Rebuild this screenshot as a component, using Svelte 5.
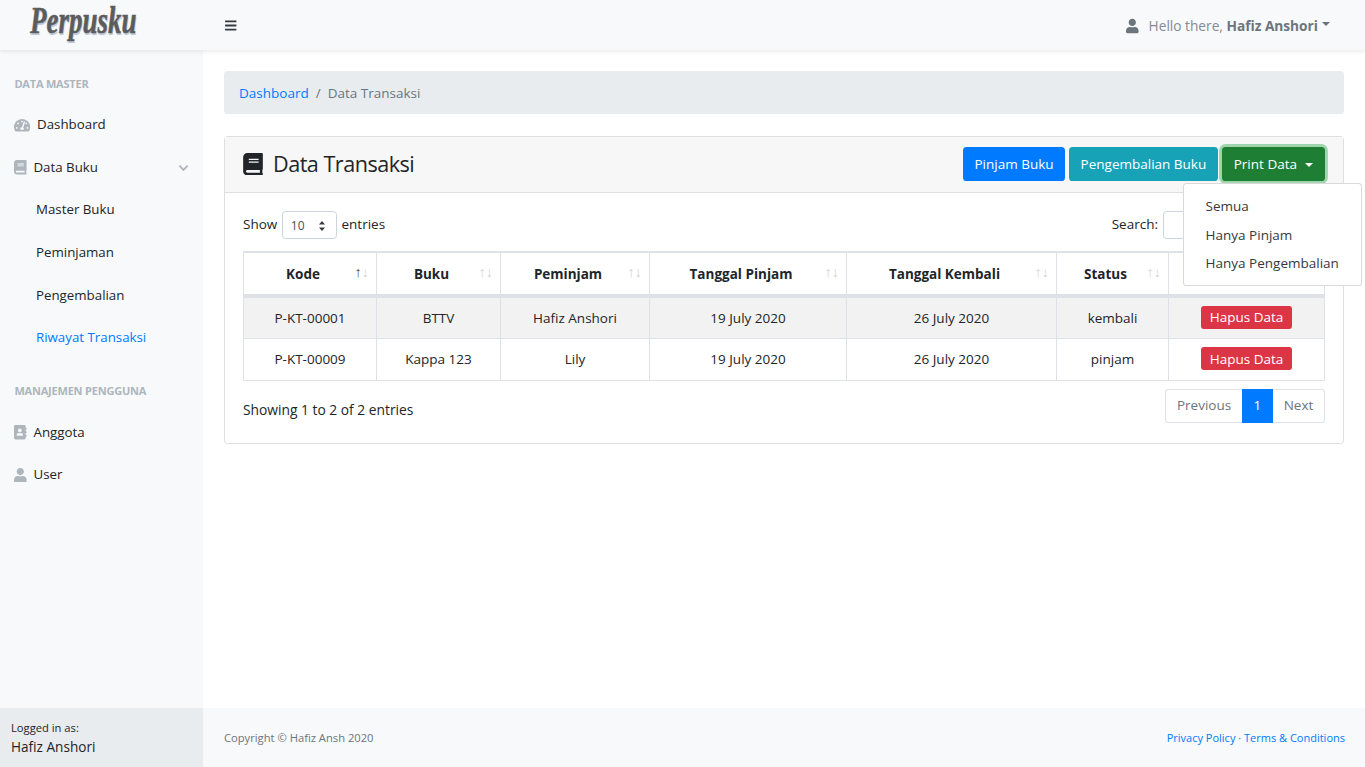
<script>
	const icons = {
		user: ['0 0 448 512', 'M224 256c70.7 0 128-57.3 128-128S294.7 0 224 0 96 57.3 96 128s57.3 128 128 128zm89.6 32h-16.7c-22.2 10.2-46.9 16-72.9 16s-50.6-5.8-72.9-16h-16.7C60.2 288 0 348.2 0 422.4V464c0 26.5 21.5 48 48 48h352c26.5 0 48-21.5 48-48v-41.6c0-74.2-60.2-134.4-134.4-134.4z'],
		book: ['0 0 448 512', 'M448 360V24c0-13.3-10.7-24-24-24H96C43 0 0 43 0 96v320c0 53 43 96 96 96h328c13.3 0 24-10.7 24-24v-16c0-7.5-3.5-14.3-8.9-18.7-4.2-15.4-4.2-59.3 0-74.7 5.4-4.3 8.9-11.1 8.9-18.6zM128 134c0-3.3 2.7-6 6-6h212c3.3 0 6 2.7 6 6v20c0 3.3-2.7 6-6 6H134c-3.3 0-6-2.7-6-6v-20zm0 64c0-3.3 2.7-6 6-6h212c3.3 0 6 2.7 6 6v20c0 3.3-2.7 6-6 6H134c-3.3 0-6-2.7-6-6v-20zm253.4 250H96c-17.7 0-32-14.3-32-32 0-17.6 14.4-32 32-32h285.4c-1.9 17.1-1.9 46.9 0 64z'],
		bars: ['0 0 448 512', 'M16 132h416c8.837 0 16-7.163 16-16V76c0-8.837-7.163-16-16-16H16C7.163 60 0 67.163 0 76v40c0 8.837 7.163 16 16 16zm0 160h416c8.837 0 16-7.163 16-16v-40c0-8.837-7.163-16-16-16H16c-8.837 0-16 7.163-16 16v40c0 8.837 7.163 16 16 16zm0 160h416c8.837 0 16-7.163 16-16v-40c0-8.837-7.163-16-16-16H16c-8.837 0-16 7.163-16 16v40c0 8.837 7.163 16 16 16z'],
		address: ['0 0 448 512', 'M436 160c6.6 0 12-5.4 12-12v-40c0-6.6-5.4-12-12-12h-20V48c0-26.5-21.5-48-48-48H48C21.5 0 0 21.5 0 48v416c0 26.5 21.5 48 48 48h320c26.5 0 48-21.5 48-48v-48h20c6.6 0 12-5.4 12-12v-40c0-6.6-5.4-12-12-12h-20v-64h20c6.6 0 12-5.4 12-12v-40c0-6.6-5.4-12-12-12h-20v-64h20zm-228-32c35.3 0 64 28.7 64 64s-28.7 64-64 64-64-28.7-64-64 28.7-64 64-64zm112 236.8c0 10.6-10 19.2-22.4 19.2H118.4C106 384 96 375.4 96 364.8v-19.2c0-31.8 30.1-57.6 67.2-57.6h5c12.3 5.1 25.7 8 39.8 8s27.6-2.9 39.8-8h5c37.1 0 67.2 25.8 67.2 57.6v19.2z'],
		gauge: ['0 0 576 512', 'M288 32C128.94 32 0 160.94 0 320c0 52.8 14.25 102.26 39.06 144.8 5.61 9.62 16.3 15.2 27.44 15.2h443c11.14 0 21.83-5.58 27.44-15.2C561.75 422.26 576 372.8 576 320c0-159.06-128.94-288-288-288zm0 64c14.71 0 26.58 10.13 30.32 23.65-1.11 2.26-2.64 4.23-3.45 6.67l-9.22 27.67c-5.13 3.49-10.97 6.01-17.64 6.01-17.67 0-32-14.33-32-32S270.33 96 288 96zM96 384c-17.67 0-32-14.33-32-32s14.33-32 32-32 32 14.33 32 32-14.33 32-32 32zm48-160c-17.67 0-32-14.33-32-32s14.33-32 32-32 32 14.33 32 32-14.33 32-32 32zm246.77-72.41l-61.33 184C343.13 347.33 352 364.54 352 384c0 11.72-3.38 22.55-8.88 32H232.88c-5.5-9.45-8.88-20.28-8.88-32 0-33.94 26.5-61.43 59.9-63.59l61.34-184.01c4.17-12.56 17.73-19.45 30.36-15.17 12.57 4.19 19.35 17.79 15.17 30.36zm14.66 57.2l15.52-46.55c3.47-1.29 7.13-2.23 11.05-2.23 17.67 0 32 14.33 32 32s-14.33 32-32 32c-11.38-.01-20.89-6.28-26.57-15.22zM480 384c-17.67 0-32-14.33-32-32s14.33-32 32-32 32 14.33 32 32-14.33 32-32 32z']
	};

	// last column sits under the open print menu, its header is never visible
	const columns = [
		{ label: 'Kode', width: 133, active: true },
		{ label: 'Buku', width: 124 },
		{ label: 'Peminjam', width: 149 },
		{ label: 'Tanggal Pinjam', width: 197 },
		{ label: 'Tanggal Kembali', width: 210 },
		{ label: 'Status', width: 112 },
		{ label: '', width: 156 }
	];

	const rows = [
		['P-KT-00001', 'BTTV', 'Hafiz Anshori', '19 July 2020', '26 July 2020', 'kembali'],
		['P-KT-00009', 'Kappa 123', 'Lily', '19 July 2020', '26 July 2020', 'pinjam']
	];
</script>

{#snippet icon(name, cls)}
	<svg class={cls} viewBox={icons[name][0]} aria-hidden="true"><path d={icons[name][1]} fill="currentColor" /></svg>
{/snippet}

<div class="app">
	<header class="topbar">
		<div class="brand-wrap"><a class="brand" href="#top">Perpusku</a></div>
		<button class="toggle" aria-label="Toggle sidebar">{@render icon('bars', 'bars')}</button>
		<div class="account">
			{@render icon('user', 'account-icon')}
			<span class="hello">Hello there, <b>Hafiz Anshori</b></span>
			<i class="caret"></i>
		</div>
	</header>

	<div class="body">
		<aside class="sidebar">
			<nav class="menu">
				<div class="heading">Data Master</div>
				<a class="item" href="#top">{@render icon('gauge', 'ico')}Dashboard</a>
				<a class="item" href="#top">
					{@render icon('book', 'ico')}Data Buku
					<svg class="chev" viewBox="0 0 12 8" aria-hidden="true"><path d="M1.5 1.5 6 6l4.500-4.500" fill="none" stroke="currentColor" stroke-width="2" /></svg>
				</a>
				<a class="item sub" href="#top">Master Buku</a>
				<a class="item sub" href="#top">Peminjaman</a>
				<a class="item sub" href="#top">Pengembalian</a>
				<a class="item sub current" href="#top">Riwayat Transaksi</a>
				<div class="heading second">Manajemen Pengguna</div>
				<a class="item" href="#top">{@render icon('address', 'ico')}Anggota</a>
				<a class="item" href="#top">{@render icon('user', 'ico')}User</a>
			</nav>
			<div class="logged">
				<div class="logged-label">Logged in as:</div>
				<div class="logged-name">Hafiz Anshori</div>
			</div>
		</aside>

		<div class="main">
			<main class="content">
				<ol class="breadcrumb">
					<li><a href="#top">Dashboard</a></li>
					<li class="sep">/</li>
					<li class="here">Data Transaksi</li>
				</ol>

				<section class="card">
					<div class="card-header">
						<h1>{@render icon('book', 'title-icon')}Data Transaksi</h1>
						<div class="actions">
							<button class="btn blue">Pinjam Buku</button>
							<button class="btn teal">Pengembalian Buku</button>
							<div class="print">
								<button class="btn green">Print Data<i class="caret white"></i></button>
								<div class="dropdown">
									<a href="#top">Semua</a>
									<a href="#top">Hanya Pinjam</a>
									<a href="#top">Hanya Pengembalian</a>
								</div>
							</div>
						</div>
					</div>

					<div class="card-body">
						<div class="tools">
							<div class="length">
								Show
								<span class="select">10
									<svg viewBox="0 0 8 12" aria-hidden="true"><path d="M4 1 7 4.500H1zM4 11 1 7.500h6z" fill="#343a40" /></svg>
								</span>
								entries
							</div>
							<div class="search">Search: <span class="input"></span></div>
						</div>

						<table>
							<colgroup>
								{#each columns as col}
									<col style="width: {col.width}px" />
								{/each}
							</colgroup>
							<thead>
								<tr>
									{#each columns as col}
										<th>
											{col.label}
											{#if col.label}
												<span class="sort"><span class:on={col.active}>↑</span><span>↓</span></span>
											{/if}
										</th>
									{/each}
								</tr>
							</thead>
							<tbody>
								{#each rows as row}
									<tr>
										{#each row as cell}
											<td>{cell}</td>
										{/each}
										<td class="action"><button class="hapus">Hapus Data</button></td>
									</tr>
								{/each}
							</tbody>
						</table>

						<div class="table-foot">
							<div class="info">Showing 1 to 2 of 2 entries</div>
							<div class="pager">
								<span class="page first">Previous</span>
								<span class="page active">1</span>
								<span class="page last">Next</span>
							</div>
						</div>
					</div>
				</section>
			</main>

			<footer class="footer">
				<span>Copyright © Hafiz Ansh 2020</span>
				<span class="links"><a href="#top">Privacy Policy</a> · <a href="#top">Terms &amp; Conditions</a></span>
			</footer>
		</div>
	</div>
</div>

<style>
	:global(body) {
		margin: 0;
		font-family: "Open Sans", "Noto Sans", sans-serif;
		font-size: 13.5px;
		line-height: 21.6px;
		color: #212529;
		background: #fff;
	}
	a { text-decoration: none; color: #007bff; }
	button { font-family: inherit; }

	.app {
		height: 100vh;
		display: flex;
		flex-direction: column;
		overflow: hidden;
	}

	.topbar {
		height: 50px;
		flex: none;
		display: flex;
		align-items: center;
		background: #f8f9fa;
		box-shadow: 0 2px 4px rgba(0, 0, 0, 0.075);
		position: relative;
		z-index: 2;
	}
	.brand-wrap {
		width: 225px;
		box-sizing: border-box;
		padding-left: 30px;
	}
	.brand {
		display: inline-block;
		transform: scaleX(0.73);
		transform-origin: left center;
		font-family: "Liberation Serif", serif;
		font-style: italic;
		font-weight: 700;
		font-size: 37px;
		color: #5c5c5c;
		-webkit-text-stroke: 0.5px #5c5c5c;
		text-shadow: 1px 2px 1px #b9c6d3;
	}
	.toggle {
		padding: 0;
		border: 0;
		background: none;
		color: #343a40;
		display: flex;
	}
	.bars { width: 11.500px; height: 13px; }
	.account {
		margin-left: auto;
		margin-right: 35px;
		padding-top: 1px;
		display: flex;
		align-items: center;
		font-size: 13.700px;
		color: #858b91;
	}
	.hello { padding-top: 1px; margin-left: -1px; }
	.account b { color: #6c757d; }
	.account-icon { width: 12.600px; height: 16px; margin-right: 11px; color: #6c757d; }
	.caret {
		display: inline-block;
		margin-left: 4px;
		margin-bottom: 3px;
		border-top: 4.300px solid #6c757d;
		border-left: 4.300px solid transparent;
		border-right: 4.300px solid transparent;
	}
	.caret.white { border-top-color: #fff; margin-left: 8px; margin-bottom: 2px; }

	.body {
		flex: 1;
		min-height: 0;
		display: flex;
	}

	.sidebar {
		width: 203px;
		flex: none;
		display: flex;
		flex-direction: column;
		background: #f8f9fa;
	}
	.menu { flex: 1; padding-top: 24px; }
	.heading {
		padding: 0 14.400px;
		font-size: 11px;
		font-weight: 700;
		line-height: 20px;
		text-transform: uppercase;
		color: #adb5bd;
		letter-spacing: -0.2px;
		margin-bottom: 9.700px;
	}
	.heading.second { margin-top: 21.700px; margin-bottom: 10.200px; }
	.item {
		display: flex;
		align-items: center;
		height: 42.600px;
		padding: 0 14.400px;
		font-size: 13.300px;
		color: #212529;
	}
	.item.sub { padding-left: 36px; }
	.item.current { color: #007bff; }
	.ico { height: 14.400px; width: auto; margin-right: 6.500px; color: #adb5bd; }
	.chev { width: 11px; height: 8px; margin-left: auto; margin-right: 0; color: #adb5bd; }
	.logged {
		height: 59px;
		box-sizing: border-box;
		padding: 10px 11px 0;
		background: #e9ecef;
		line-height: 19px;
	}
	.logged-label { font-size: 11.200px; }
	.logged-name { font-size: 13.600px; }

	.main {
		flex: 1;
		min-width: 0;
		display: flex;
		flex-direction: column;
	}
	.content { flex: 1; padding: 21px 21px 0; }

	.breadcrumb {
		display: flex;
		gap: 7px;
		list-style: none;
		margin: 0 0 22px;
		padding: 12px 15px 9.600px;
		background: #e9ecef;
		border-radius: 3.600px;
	}
	.sep, .here { color: #6c757d; }

	.card {
		border: 1px solid #dfdfdf;
		border-radius: 3.600px;
	}
	.card-header {
		height: 56px;
		box-sizing: border-box;
		display: flex;
		align-items: center;
		justify-content: space-between;
		padding: 0 18px 1px;
		background: #f7f7f7;
		border-bottom: 1px solid #dfdfdf;
	}
	h1 {
		display: flex;
		align-items: center;
		margin: 0;
		font-size: 21.600px;
		font-weight: 400;
		line-height: 26px;
		letter-spacing: -0.5px;
	}
	.title-icon { width: 20px; height: 22.500px; margin-right: 10px; color: #212529; }
	.actions { display: flex; gap: 4px; }
	.print { position: relative; }
	.btn {
		height: 34px;
		padding: 0 10.500px;
		border: 1px solid transparent;
		border-radius: 3.600px;
		color: #fff;
		font-size: 13.500px;
	}
	.blue { background: #007bff; }
	.teal { background: #17a2b8; }
	.green {
		padding: 0 11px;
		background: #1e7e34;
		box-shadow: 0 0 0 2.900px rgba(72, 180, 97, 0.5);
	}
	.dropdown {
		position: absolute;
		top: 36px;
		right: -37px;
		width: 179px;
		box-sizing: border-box;
		padding: 8px 0 6.400px;
		background: #fff;
		border: 1px solid rgba(0, 0, 0, 0.15);
		border-radius: 3.600px;
		z-index: 5;
	}
	.dropdown a {
		display: block;
		padding: 3.600px 21.600px;
		color: #343a40;
		white-space: nowrap;
	}

	.card-body { padding: 18px 18px 20px; }
	.tools {
		display: flex;
		justify-content: space-between;
		align-items: center;
		height: 28px;
		margin-bottom: 12px;
	}
	.length { display: flex; align-items: center; gap: 4.600px; }
	.select {
		display: flex;
		align-items: center;
		justify-content: space-between;
		width: 55px;
		height: 28px;
		box-sizing: border-box;
		padding: 2px 10px 0 8px;
		border: 1px solid #ced4da;
		border-radius: 3.600px;
		font-size: 12px;
		color: #495057;
	}
	.select svg { width: 8px; height: 12px; }
	.search { display: flex; align-items: center; gap: 5px; }
	.input {
		width: 162px;
		height: 28px;
		box-sizing: border-box;
		border: 1px solid #ced4da;
		border-radius: 3.600px;
	}

	table {
		width: 1081px;
		table-layout: fixed;
		border-collapse: collapse;
		border: 1px solid #dee2e6;
		text-align: center;
	}
	th {
		position: relative;
		height: 44px;
		padding: 3px 14px 0 0;
		box-sizing: border-box;
		border: 1px solid #dee2e6;
		border-top-width: 2px;
		border-bottom-width: 4px;
		font-weight: 700;
	}
	td {
		height: 42px;
		padding: 1px 0 0;
		box-sizing: border-box;
		border: 1px solid #dee2e6;
	}
	td.action { padding: 0; }
	tbody tr:nth-child(odd) { background: #f2f2f2; }
	.sort {
		position: absolute;
		top: 11px;
		right: 7px;
		font-family: "Liberation Sans", sans-serif;
		font-size: 14.400px;
		line-height: 16px;
		font-weight: 400;
		color: #cfd2d4;
	}
	.sort .on { color: #495057; }
	.hapus {
		display: block;
		height: 23px;
		margin: -1px auto 0;
		padding: 0 8.500px;
		border: 0;
		border-radius: 2.900px;
		background: #dc3545;
		color: #fff;
		font-size: 13.500px;
	}

	.table-foot {
		display: flex;
		justify-content: space-between;
		margin-top: 8px;
	}
	.info { padding-top: 10px; font-size: 13.800px; }
	.pager { display: flex; }
	.page {
		height: 34px;
		box-sizing: border-box;
		padding: 0 10.700px;
		display: flex;
		align-items: center;
		border: 1px solid #dee2e6;
		color: #6c757d;
	}
	.page.first { border-radius: 3.600px 0 0 3.600px; border-right: 0; }
	.page.last { border-radius: 0 3.600px 3.600px 0; border-left: 0; }
	.page.active { background: #007bff; border-color: #007bff; color: #fff; }

	.footer {
		height: 59px;
		flex: none;
		box-sizing: border-box;
		display: flex;
		align-items: center;
		justify-content: space-between;
		padding: 0 20px 0 21px;
		background: #f8f9fa;
		font-size: 11.200px;
		color: #6c757d;
	}
	.links { font-size: 11px; }
</style>
